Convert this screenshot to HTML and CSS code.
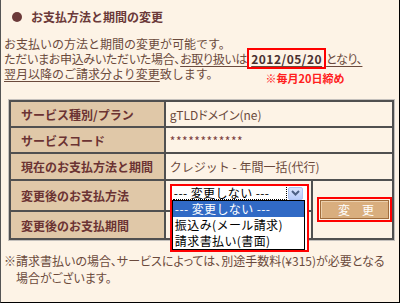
FILE: index.html
```html
<!DOCTYPE html>
<html lang="ja">
<head>
  <meta charset="UTF-8">
  <title>お支払方法と期間の変更</title>
  <link rel="stylesheet" href="styles.css">
</head>
<body>
  <div class="page">
    <h1 class="title"><span class="dot"></span>お支払方法と期間の変更</h1>
    <p class="lead">
      お支払いの方法と期間の変更が可能です。<br>
      <span class="tight narrow">ただいまお申込みいただいた場合、<span class="ul">お取り扱いは<span class="date">2012/05/20</span>となり、</span></span><br>
      <span class="ul">翌月以降のご請求分より変更</span>致します。<span class="note">※毎月20日締め</span>
    </p>

    <table class="info">
      <tr class="r1">
        <th>サービス種別/プラン</th>
        <td colspan="2" class="tight">gTLDドメイン(ne)</td>
      </tr>
      <tr class="r2">
        <th>サービスコード</th>
        <td colspan="2" class="code">************</td>
      </tr>
      <tr class="r3">
        <th>現在のお支払方法と期間</th>
        <td colspan="2">クレジット - 年間一括(代行)</td>
      </tr>
      <tr class="r4">
        <th>変更後のお支払方法</th>
        <td class="pick-cell">
          <div class="pick-slot">
            <div class="dropdown">
              <div class="dd-field">
                <span class="dd-value">--- 変更しない ---</span>
                <span class="dd-arrow">
                  <svg width="9" height="6" viewBox="0 0 9 6"><path d="M1 1 L4.5 4.5 L8 1" fill="none" stroke="#4d6185" stroke-width="2"/></svg>
                </span>
              </div>
              <ul class="dd-list">
                <li class="on">--- 変更しない ---</li>
                <li>振込み(メール請求)</li>
                <li>請求書払い(書面)</li>
              </ul>
            </div>
          </div>
        </td>
        <td rowspan="2" class="btn-cell">
          <span class="btn-frame"><button type="button" class="btn">変　更</button></span>
        </td>
      </tr>
      <tr class="r5">
        <th>変更後のお支払期間</th>
        <td></td>
      </tr>
    </table>

    <p class="foot">※請求書払いの場合、サービスによっては、別途手数料(¥315)が必要となる場合がございます。</p>
  </div>
</body>
</html>
```

FILE: styles.css
```css
body {
  margin: 0;
  background-color: #fdf3e6;
  font-family: "Noto Sans CJK JP", sans-serif;
  font-size: 12px;
  color: #6b4a3c;
}

.tight {
  font-feature-settings: "palt";
}

.narrow {
  letter-spacing: -0.3px;
}

.page {
  width: 400px;
  height: 303px;
  box-sizing: border-box;
  padding: 0 3px;
  border-left: 1px solid #555;
  border-right: 1px solid #000;
  border-bottom: 1px solid #000;
  overflow: hidden;
}

.title {
  margin: 0;
  padding: 9px 0 0 8px;
  font-size: 12px;
  line-height: 16px;
  color: #6b3939;
  display: flex;
  align-items: center;
}

.dot {
  width: 10px;
  height: 10px;
  border-radius: 50%;
  background-color: #6b3939;
  margin-right: 9px;
}

.lead {
  margin: 11px 0 0;
  line-height: 15px;
}

.ul {
  text-decoration: underline;
  text-underline-offset: 2px;
}

.date {
  border: 2px solid #f00;
  padding: 0 2px;
  font-weight: bold;
  color: #4a3030;
  letter-spacing: 0.5px;
}

.note {
  margin-left: 47px;
  color: #ff2020;
  font-weight: bold;
  font-size: 11px;
  vertical-align: -4px;
  line-height: 10px;
}

.info {
  margin: 17px 0 0 5px;
  width: 385px;
  border-collapse: collapse;
  outline: 1px solid #c4c0bc;
}

.info th,
.info td {
  border: 2px solid #505050;
  padding: 0 0 0 4px;
  text-align: left;
  white-space: nowrap;
}

.info th {
  width: 143px;
  padding-left: 10px;
  background-color: #e0c8a8;
  color: #6b3333;
}

.r1 th, .r2 th { height: 24px; }
.r3 th { height: 25px; }
.r4 th { height: 29px; }
.r5 th { height: 26px; }

.code {
  color: #7a3d3d;
  letter-spacing: 0.5px;
}

.pick-cell {
  width: 142px;
  vertical-align: top;
}

.pick-slot {
  position: relative;
  height: 29px;
}

.dropdown {
  position: absolute;
  top: 3px;
  left: 0;
  z-index: 2;
  width: 133px;
  padding-right: 2px;
  border: 2px solid #f00;
  background-color: #fff;
  color: #000;
  letter-spacing: 0.4px;
}

.dd-field {
  display: flex;
  align-items: center;
  height: 14px;
  padding: 0 2px 0 1px;
}

.dd-value {
  flex: 1;
  height: 12px;
  line-height: 12px;
  border-right: 1px dotted #000;
  border-bottom: 1px dotted #000;
  padding-left: 1px;
}

.dd-arrow {
  width: 13px;
  height: 11px;
  margin-left: 1px;
  border: 1px solid #b1c6f5;
  border-radius: 2px;
  background: linear-gradient(#dbe6fe, #b8ccfa);
  display: flex;
  align-items: center;
  justify-content: center;
}

.dd-list {
  list-style: none;
  margin: 0;
  padding: 0;
  border: 1px solid #000;
}

.dd-list li {
  height: 16px;
  line-height: 16px;
  padding-left: 2px;
}

.dd-list li.on {
  background-color: #316ac5;
  color: #fff;
}

.btn-cell {
  text-align: center;
  vertical-align: middle;
  padding: 0;
}

.btn-frame {
  display: inline-block;
  border: 2px solid #f00;
  padding: 1px;
  line-height: 0;
}

.btn {
  width: 69px;
  height: 19px;
  padding: 0 0 0 3px;
  background-color: #d9ae7e;
  border: 1px solid #9f6c3c;
  box-shadow: inset 1px 1px 0 #ecd0ad;
  color: #fff;
  font-family: "Noto Sans CJK JP", sans-serif;
  font-size: 12px;
  line-height: 17px;
}

.foot {
  margin: 12px 0 0;
  padding-left: 12px;
  text-indent: -12px;
  line-height: 17px;
  font-feature-settings: "palt";
}
```
